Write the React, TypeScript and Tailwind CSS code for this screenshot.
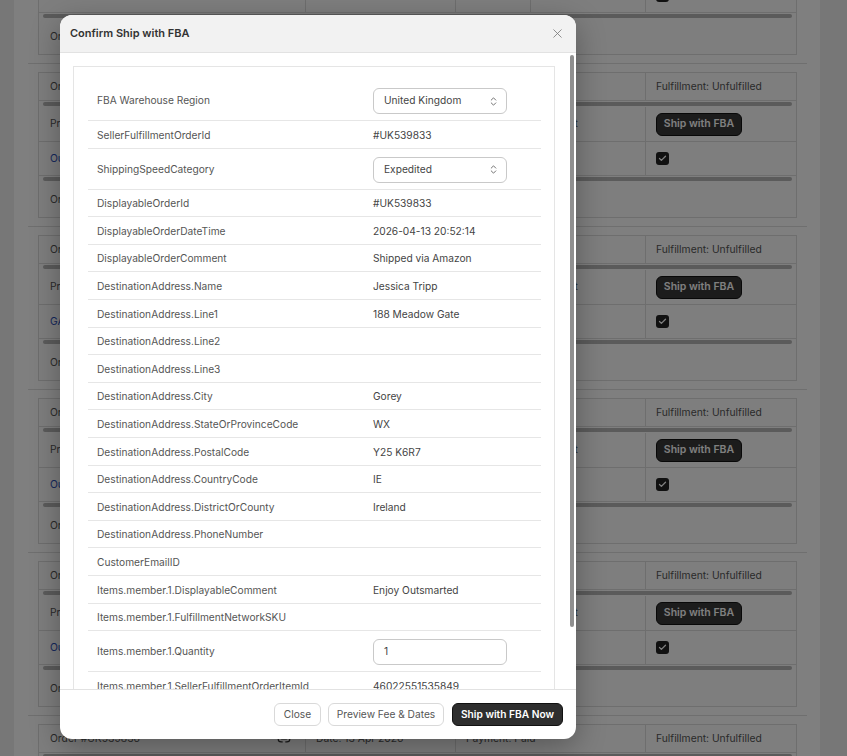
import { X, ChevronsUpDown, Check, Link2 } from 'lucide-react';

type Field = { label: string; value?: string; select?: string; input?: string };

const fields: Field[] = [
  { label: 'FBA Warehouse Region', select: 'United Kingdom' },
  { label: 'SellerFulfillmentOrderId', value: '#UK539833' },
  { label: 'ShippingSpeedCategory', select: 'Expedited' },
  { label: 'DisplayableOrderId', value: '#UK539833' },
  { label: 'DisplayableOrderDateTime', value: '2026-04-13 20:52:14' },
  { label: 'DisplayableOrderComment', value: 'Shipped via Amazon' },
  { label: 'DestinationAddress.Name', value: 'Jessica Tripp' },
  { label: 'DestinationAddress.Line1', value: '188 Meadow Gate' },
  { label: 'DestinationAddress.Line2', value: '' },
  { label: 'DestinationAddress.Line3', value: '' },
  { label: 'DestinationAddress.City', value: 'Gorey' },
  { label: 'DestinationAddress.StateOrProvinceCode', value: 'WX' },
  { label: 'DestinationAddress.PostalCode', value: 'Y25 K6R7' },
  { label: 'DestinationAddress.CountryCode', value: 'IE' },
  { label: 'DestinationAddress.DistrictOrCounty', value: 'Ireland' },
  { label: 'DestinationAddress.PhoneNumber', value: '' },
  { label: 'CustomerEmailID', value: '' },
  { label: 'Items.member.1.DisplayableComment', value: 'Enjoy Outsmarted' },
  { label: 'Items.member.1.FulfillmentNetworkSKU', value: '' },
  { label: 'Items.member.1.Quantity', input: '1' },
  { label: 'Items.member.1.SellerFulfillmentOrderItemId', value: '46022551535849' },
];

const groups = [
  { id: 'UK539812', linkText: 'Outsmarted x1' },
  { id: 'UK539820', linkText: 'Outsmarted x1' },
  { id: 'UK539826', linkText: 'GAME Night x1' },
  { id: 'UK539830', linkText: 'Outsmarted x1' },
  { id: 'UK539833', linkText: 'Outsmarted x1' },
  { id: 'UK539836', linkText: 'Outsmarted x1' },
];

function ScrollBar() {
  return (
    <div className="px-[4px] py-[1px]">
      <div className="h-[4px] rounded-full bg-[#b6b6b6]" />
    </div>
  );
}

function OrderGroup({ g }: { g: (typeof groups)[number] }) {
  return (
    <div className="ml-[24px] mr-[23px] border border-[#dcdcdc] bg-[#fdfdfd] text-[10.3px] text-[#555]">
      <div className="grid grid-cols-[267px_150px_190px_1fr] h-[28px] border-b border-[#dcdcdc]">
        <div className="flex items-center justify-between pl-[11px] pr-[14px] border-r border-[#dcdcdc]">
          <span>Order #{g.id}</span>
          <Link2 size={14} className="text-[#333]" />
        </div>
        <div className="flex items-center pl-[10px] border-r border-[#dcdcdc]">Date: 13 Apr 2026</div>
        <div className="flex items-center pl-[10px] border-r border-[#dcdcdc]">Payment: Paid</div>
        <div className="flex items-center pl-[10px]">Fulfillment: Unfulfilled</div>
      </div>
      <ScrollBar />
      <div className="grid grid-cols-[267px_150px_190px_1fr] h-[35px] border-b border-[#dcdcdc]">
        <div className="flex items-center pl-[11px] border-r border-[#dcdcdc]">Product</div>
        <div className="flex items-center pl-[10px] border-r border-[#dcdcdc]">SKU</div>
        <div className="flex items-center pl-[10px] border-r border-[#dcdcdc]">Awaiting FBA shipment</div>
        <div className="flex items-center pl-[10px]">
          <button className="h-[23px] w-[86px] rounded-[6px] bg-[#383838] border border-[#111] text-white font-semibold text-[10.5px]">
            Ship with FBA
          </button>
        </div>
      </div>
      <div className="grid grid-cols-[267px_150px_75px_115px_1fr] h-[34px] border-b border-[#dcdcdc]">
        <div className="flex items-center pl-[11px] border-r border-[#dcdcdc] text-[#2b50b8]">{g.linkText}</div>
        <div className="flex items-center pl-[10px] border-r border-[#dcdcdc]">FBA-OUT-01</div>
        <div className="flex items-center pl-[10px] border-r border-[#dcdcdc]">1</div>
        <div className="flex items-center pl-[10px] border-r border-[#dcdcdc]">£34.99</div>
        <div className="flex items-center pl-[10px]">
          <span className="w-[13px] h-[13px] rounded-[3px] bg-[#222] flex items-center justify-center">
            <Check size={9} strokeWidth={3.5} className="text-white" />
          </span>
        </div>
      </div>
      <ScrollBar />
      <div className="h-[35px] flex items-center pl-[11px]">Order notes: none</div>
    </div>
  );
}

export default function App() {
  return (
    <div className="relative w-[847px] h-[756px] overflow-hidden font-['Inter',sans-serif]">
      {/* page behind the dialog */}
      <div className="flex h-full bg-[#eeeeee]">
        <div className="w-[14px]" />
        <div className="w-[806px] bg-white">
          <div className="-mt-[91px] flex flex-col">
            {groups.map((g, i) => (
              <div key={i}>
                <OrderGroup g={g} />
                <div className="mt-[8px] mb-[8px] ml-[14px] mr-[13px] h-px bg-[#dedede]" />
              </div>
            ))}
          </div>
        </div>
      </div>

      {/* overlay + dialog */}
      <div className="absolute inset-0 bg-black/50 pl-[60px] pt-[15px]">
        <div className="w-[516px] h-[724px] bg-white rounded-[12px] overflow-hidden flex flex-col shadow-[0_8px_30px_rgba(0,0,0,0.3)]">
          <div className="h-[38px] shrink-0 bg-[#f2f2f2] border-b border-[#e2e2e2] flex items-center justify-between pl-[10px] pr-[11px]">
            <span className="text-[11px] font-semibold text-[#333]">Confirm Ship with FBA</span>
            <X size={15} strokeWidth={1.3} className="text-[#777]" />
          </div>

          <div className="flex-1 flex overflow-hidden">
            <div className="pl-[13px] pt-[13px] w-[495px]">
              <div className="border border-[#e5e5e5] pl-[14px] pr-[13px] pt-[13px] text-[10.2px]">
                {fields.map((f, i) => (
                  <div
                    key={i}
                    className={`grid grid-cols-[276px_1fr] border-b border-[#e6e6e6] ${
                      f.select || f.input ? 'h-[41px]' : 'h-[27.6px]'
                    }`}
                  >
                    <div className="flex items-center pl-[9px] pt-[2px] text-[#555]">{f.label}</div>
                    <div className="flex items-center pl-[9px] pt-[2px] text-[#444]">
                      {f.select && (
                        <div className="w-[134px] h-[26px] border border-[#c9c9c9] rounded-[6px] flex items-center justify-between pl-[10px] pr-[7px]">
                          <span>{f.select}</span>
                          <ChevronsUpDown size={11} className="text-[#666]" />
                        </div>
                      )}
                      {f.input && (
                        <div className="w-[134px] h-[26px] border border-[#c9c9c9] rounded-[6px] flex items-center pl-[10px]">
                          {f.input}
                        </div>
                      )}
                      {f.value}
                    </div>
                  </div>
                ))}
              </div>
            </div>
            <div className="ml-[15px] pt-[2px]">
              <div className="w-[4px] h-[572px] rounded-full bg-[#8f8f8f]" />
            </div>
          </div>

          <div className="h-[50px] shrink-0 border-t border-[#e2e2e2] flex items-center justify-end gap-[7px] pr-[13px] text-[10.2px]">
            <button className="h-[23px] w-[47px] border border-[#d9d9d9] rounded-[6px] text-[#555] bg-white">Close</button>
            <button className="h-[23px] w-[116px] border border-[#d9d9d9] rounded-[6px] text-[#555] bg-white">
              Preview Fee &amp; Dates
            </button>
            <button className="h-[23px] w-[111px] rounded-[6px] bg-[#2e2e2e] border border-[#111] text-white font-semibold ml-[1px]">
              Ship with FBA Now
            </button>
          </div>
        </div>
      </div>
    </div>
  );
}
